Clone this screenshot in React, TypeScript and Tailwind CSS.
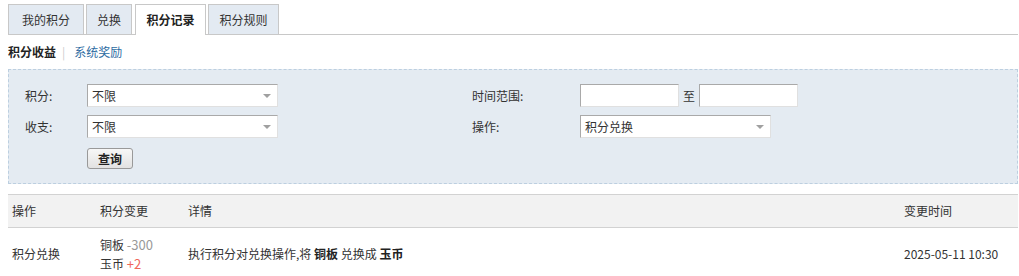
const tabs = [
  { label: "我的积分", w: "w-[76px]" },
  { label: "兑换", w: "w-[46px]" },
  { label: "积分记录", w: "w-[71px] ml-px", active: true },
  { label: "积分规则", w: "w-[71px]" },
];

const Caret = () => (
  <span className="ml-auto mr-[6px] w-0 h-0 border-l-[4px] border-r-[4px] border-t-[4px] border-l-transparent border-r-transparent border-t-[#a0a0a0]" />
);

const Select = ({ value, w = "w-[191px]" }: { value: string; w?: string }) => (
  <div className={`${w} h-[23px] flex items-center bg-white border border-[#a9a9a9] border-r-[#e0e0e0] border-b-[#e0e0e0] pl-[4px] text-[#333]`}>
    <span>{value}</span>
    <Caret />
  </div>
);

const Input = () => (
  <div className="w-[99px] h-[23px] bg-white border border-[#a9a9a9] border-r-[#e0e0e0] border-b-[#e0e0e0]" />
);

export default function App() {
  return (
    <div className="w-[1019px] h-[276px] overflow-hidden bg-white text-[12px] text-[#333] font-['Noto_Sans_CJK_SC','Noto_Sans',sans-serif]">
      {/* tabs */}
      <div className="ml-[8px] mr-[1px] pt-[4px] flex items-end gap-[2px] border-b border-[#c8c8c8]">
        {tabs.map((t) => (
          <div
            key={t.label}
            className={
              t.active
                ? `${t.w} h-[31px] -mb-px flex items-center justify-center bg-white border border-b-0 border-[#c8c8c8] font-bold text-[#222]`
                : `${t.w} h-[30px] flex items-center justify-center bg-[#e3eaf2] border border-b-0 border-[#c8c8c8] text-[#333]`
            }
          >
            {t.label}
          </div>
        ))}
      </div>

      {/* sub nav */}
      <div className="ml-[8px] h-[34px] flex items-center">
        <span className="font-bold text-[#222]">积分收益</span>
        <span className="ml-[6px] mr-[9px] text-[#ccc]">|</span>
        <span className="text-[#2d6ca2]">系统奖励</span>
      </div>

      {/* filter box */}
      <div className="ml-[8px] mr-[1px] h-[115px] border border-dashed border-[#bccfe0] bg-[#e4ebf2] pt-[14px] pl-[16px]">
        <div className="flex">
          <div className="w-[447px] flex flex-col gap-[8px]">
            <div className="flex items-center">
              <span className="w-[62px]">积分:</span>
              <Select value="不限" />
            </div>
            <div className="flex items-center">
              <span className="w-[62px]">收支:</span>
              <Select value="不限" />
            </div>
            <div className="flex items-center pl-[62px] pt-[2px]">
              <button className="w-[46px] h-[21px] border border-[#999] rounded-[3px] bg-gradient-to-b from-[#f7f7f7] to-[#e2e2e2] font-bold text-[#222] leading-none">
                查询
              </button>
            </div>
          </div>
          <div className="flex flex-col gap-[8px]">
            <div className="flex items-center">
              <span className="w-[108px]">时间范围:</span>
              <Input />
              <span className="mx-[4px]">至</span>
              <Input />
            </div>
            <div className="flex items-center">
              <span className="w-[108px]">操作:</span>
              <Select value="积分兑换" />
            </div>
          </div>
        </div>
      </div>

      {/* table */}
      <div className="ml-[8px] mr-[1px] mt-[10px]">
        <div className="h-[34px] flex items-center bg-[#f2f2f2] border-t border-b border-[#d2d2d2]">
          <span className="w-[88px] pl-[4px]">操作</span>
          <span className="w-[88px] pl-[4px]">积分变更</span>
          <span className="w-[716px] pl-[4px]">详情</span>
          <span className="pl-[4px]">变更时间</span>
        </div>
        <div className="flex items-center py-[7px]">
          <span className="w-[88px] pl-[4px]">积分兑换</span>
          <div className="w-[88px] pl-[4px] flex flex-col leading-[19px]">
            <span>
              铜板 <span className="text-[#999] text-[13px]">-300</span>
            </span>
            <span>
              玉币 <span className="text-[#f0675a] text-[13px]">+2</span>
            </span>
          </div>
          <span className="w-[716px] pl-[4px]">
            执行积分对兑换操作,将 <b className="text-[#222]">铜板</b> 兑换成 <b className="text-[#222]">玉币</b>
          </span>
          <span className="pl-[4px]">2025-05-11 10:30</span>
        </div>
      </div>
    </div>
  );
}
